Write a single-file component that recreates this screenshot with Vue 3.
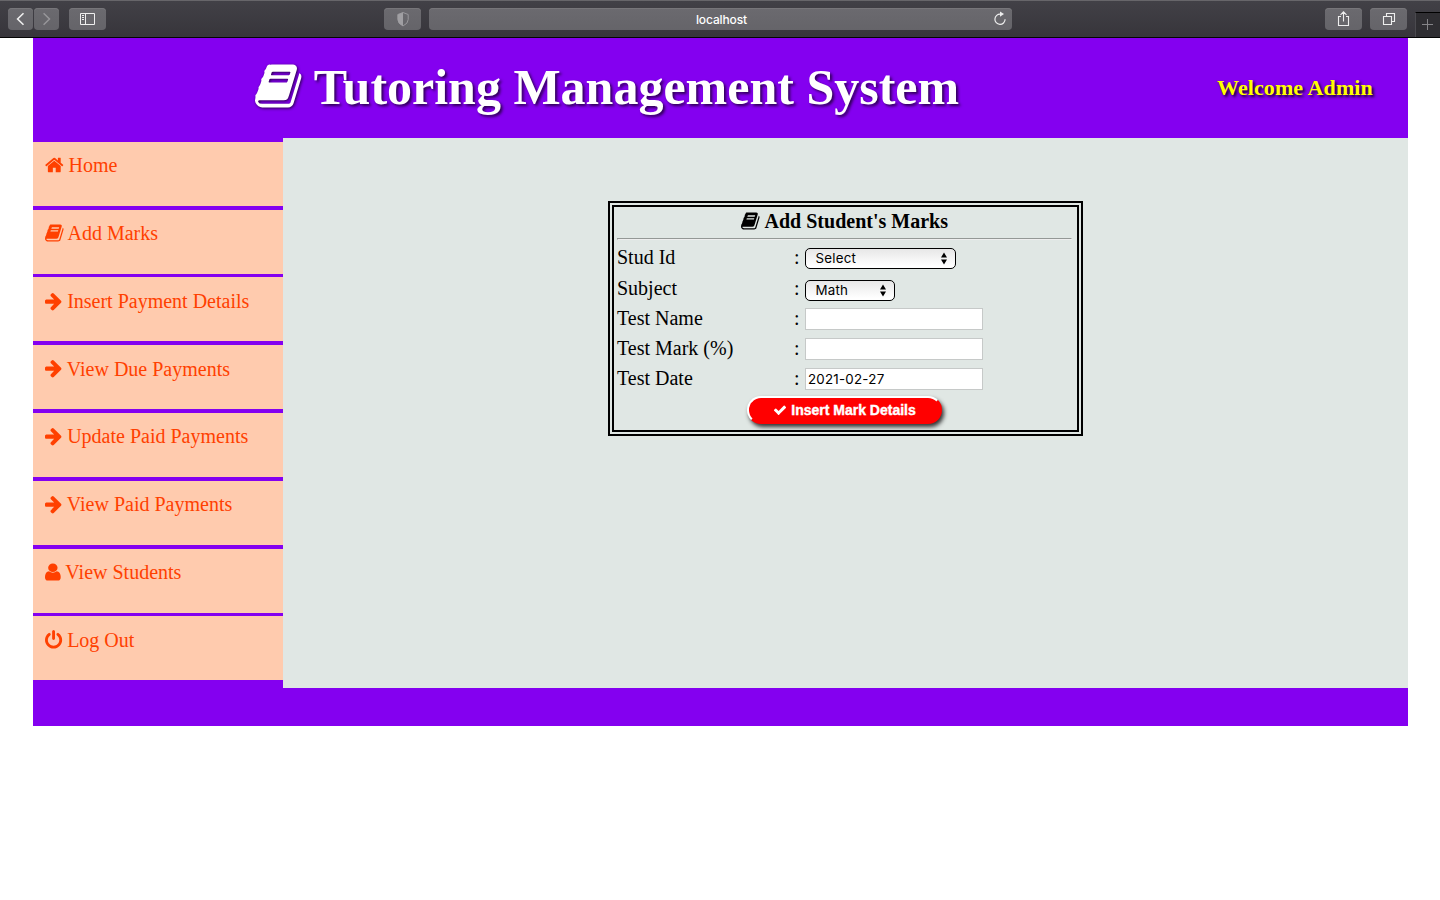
<script setup>
const icons = {
  home: { box: '64 0 1664 1792', w: 0.9286, d: 'M1472 992v480q0 26-19 45t-45 19h-384v-384h-256v384h-384q-26 0-45-19t-19-45v-480q0-1 .5-3t.5-3l575-474 575 474q1 2 1 6zm223-69l-62 74q-8 9-21 11h-3q-13 0-21-7l-692-577-692 577q-12 8-24 7-13-2-21-11l-62-74q-8-10-7-23.5t11-21.5l719-599q32-26 76-26t76 26l244 204v-195q0-14 9-23t23-9h192q14 0 23 9t9 23v408l219 182q10 8 11 21.5t-7 23.5z' },
  book: { box: '64 0 1664 1792', w: 0.9286, d: 'M1703 478q40 57 18 129l-275 906q-19 64-76.5 107.5t-122.5 43.5h-923q-77 0-148.5-53.5t-99.5-131.5q-24-67-2-127 0-4 3-27t4-37q1-8-3-21.5t-3-19.5q2-11 8-21t16.5-23.5 16.5-23.5q23-38 45-91.5t30-91.5q3-10 .5-30t-.5-28q3-11 17-28t17-23q21-36 42-92t25-90q1-9-2.5-32t.5-28q4-13 22-30.5t22-22.5q19-26 42.5-84.5t27.5-96.5q1-8-3-25.5t-2-26.5q2-8 9-18t18-23 17-21q8-12 16.5-30.5t15-35 16-36 19.5-32 26.5-23.5 36-11.5 47.5 5.5l-1 3q38-9 51-9h761q74 0 114 56t18 130l-274 906q-36 119-71.5 153.5t-128.5 34.5h-869q-27 0-38 15-11 16-1 43 24 70 144 70h923q29 0 56-15.5t35-41.5l300-987q7-22 5-57 38 15 59 43zm-1064 2q-4 13 2 22.5t20 9.5h608q13 0 25.5-9.5t16.5-22.5l21-64q4-13-2-22.5t-20-9.5h-608q-13 0-25.5 9.5t-16.5 22.5zm-83 256q-4 13 2 22.5t20 9.5h608q13 0 25.5-9.5t16.5-22.5l21-64q4-13-2-22.5t-20-9.5h-608q-13 0-25.5 9.5t-16.5 22.5z' },
  arrow: { box: '128 0 1536 1792', w: 0.8571, d: 'M1600 960q0 54-37 91l-651 651q-39 37-91 37-51 0-90-37l-75-75q-38-38-38-91t38-91l293-293h-704q-52 0-84.5-37.5t-32.5-90.5v-128q0-53 32.5-90.5t84.5-37.5h704l-293-294q-38-36-38-90t38-90l75-75q38-38 90-38 53 0 91 38l651 651q37 35 37 90z' },
  user: { box: '256 0 1280 1792', w: 0.7857, d: 'M1536 1399q0 109-62.5 187t-150.5 78h-854q-88 0-150.5-78t-62.5-187q0-85 8.5-160.5t31.5-152 58.5-131 94-89 134.5-34.5q131 128 313 128t313-128q76 0 134.5 34.5t94 89 58.5 131 31.5 152 8.5 160.5zm-256-887q0 159-112.5 271.5t-271.5 112.5-271.5-112.5-112.5-271.5 112.5-271.5 271.5-112.5 271.5 112.5 112.5 271.5z' },
  power: { box: '128 0 1536 1792', w: 0.8571, d: 'M1664 896q0 156-61 298t-164 245-245 164-298 61-298-61-245-164-164-245-61-298q0-182 80.5-343t226.5-270q43-32 95.5-25t83.5 50q32 42 24.5 94.5t-49.5 84.5q-98 74-151.5 181t-53.5 228q0 104 40.5 198.5t109.5 163.5 163.5 109.5 198.5 40.5 198.5-40.5 163.5-109.5 109.5-163.5 40.5-198.5q0-121-53.5-228t-151.5-181q-42-32-49.5-84.5t24.5-94.5q31-43 84-50t95 25q146 109 226.5 270t80.5 343zm-640-768v640q0 52-38 90t-90 38-90-38-38-90v-640q0-52 38-90t90-38 90 38 38 90z' }
}
const menu = [
  { icon: icons.home, text: 'Home' },
  { icon: icons.book, text: 'Add Marks' },
  { icon: icons.arrow, text: 'Insert Payment Details' },
  { icon: icons.arrow, text: 'View Due Payments' },
  { icon: icons.arrow, text: 'Update Paid Payments' },
  { icon: icons.arrow, text: 'View Paid Payments' },
  { icon: icons.user, text: 'View Students' },
  { icon: icons.power, text: 'Log Out' }
]
const rows = [
  { label: 'Stud Id', kind: 'select wide', value: 'Select' },
  { label: 'Subject', kind: 'select narrow', value: 'Math' },
  { label: 'Test Name', kind: 'input', value: '' },
  { label: 'Test Mark (%)', kind: 'input', value: '' },
  { label: 'Test Date', kind: 'input', value: '2021-02-27' }
]
</script>

<template>
  <div class="screen">
    <div class="chrome">
      <div class="btn nav back"><svg width="25" height="22" viewBox="0 0 25 22"><path d="M15.5 5.2L9.6 11l5.9 5.8" fill="none" stroke="#eee" stroke-width="1.6" /></svg></div>
      <div class="btn nav fwd"><svg width="25" height="22" viewBox="0 0 25 22"><path d="M9.6 5.2l5.9 5.8-5.9 5.8" fill="none" stroke="#97969a" stroke-width="1.5" /></svg></div>
      <div class="btn side"><svg width="37" height="22" viewBox="0 0 37 22"><path d="M11.5 5.5h14v11h-14zM16.5 5.5v11M13 7.5h2M13 9.5h2M13 11.5h2" fill="none" stroke="#eee" /></svg></div>
      <div class="btn shield"><svg width="37" height="22" viewBox="0 0 37 22"><path d="M19 4.5l5.2 2v5q0 4-5.2 6.5-5.2-2.5-5.2-6.5v-5z" fill="none" stroke="#98979b" /><path d="M19 4.5l-5.2 2v5q0 4 5.2 6.5z" fill="#a09fa3" /></svg></div>
      <div class="btn address">
        <span>localhost</span>
        <svg class="reload" width="16" height="16" viewBox="0 0 16 16"><path d="M8.5 3.2A5.1 5.1 0 1 0 13.1 8.3" fill="none" stroke="#eee" stroke-width="1.2" /><path d="M8 .5v5.3l4-2.8z" fill="#eee" /></svg>
      </div>
      <div class="btn share"><svg width="37" height="22" viewBox="0 0 37 22"><path d="M16 8.5h-2.500v9h10v-9H21M18.5 13.5V4M15.5 6.800l3-3 3 3" fill="none" stroke="#eee" stroke-width="1.1" /></svg></div>
      <div class="btn tabs"><svg width="37" height="22" viewBox="0 0 37 22"><path d="M13.5 8.5h8v8h-8zM16.5 8V5.5h8v8H22" fill="none" stroke="#eee" stroke-width="1.1" /></svg></div>
      <div class="newtab"><svg width="24" height="24" viewBox="0 0 24 24"><path d="M6 11.5h11M11.5 6v11" stroke="#858488" fill="none" /></svg></div>
    </div>

    <div class="site">
      <header>
        <h1><svg class="fa" :viewBox="icons.book.box"><path :d="icons.book.d" /></svg> Tutoring Management System</h1>
        <div class="welcome">Welcome Admin</div>
      </header>
      <div class="body">
        <nav>
          <a v-for="m in menu" :key="m.text"><svg class="fa" preserveAspectRatio="none" :viewBox="m.icon.box" :style="{ width: m.icon.w + 'em' }"><path :d="m.icon.d" /></svg> {{ m.text }}</a>
        </nav>
        <main>
          <form class="card">
            <h2><svg class="fa" :viewBox="icons.book.box"><path :d="icons.book.d" /></svg> Add Student's Marks</h2>
            <div class="rule"></div>
            <div v-for="r in rows" :key="r.label" class="row" :class="r.kind">
              <span class="label">{{ r.label }}</span>
              <span class="colon">:</span>
              <div class="field">
                <span>{{ r.value }}</span>
                <svg v-if="r.kind !== 'input'" width="8" height="13" viewBox="0 0 8 13"><path d="M1 5.5L4 .5l3 5zM1 7.5h6l-3 5z" /></svg>
              </div>
            </div>
            <div class="submit">
              <svg class="fa" viewBox="0 0 1792 1792"><path d="M1671 566q0 40-28 68l-724 724-136 136q-28 28-68 28t-68-28l-136-136-362-362q-28-28-28-68t28-68l136-136q28-28 68-28t68 28l294 295 656-657q28-28 68-28t68 28l136 136q28 28 28 68z" /></svg>
              <span>Insert Mark Details</span>
            </div>
          </form>
        </main>
      </div>
      <footer></footer>
    </div>
  </div>
</template>

<style>
body { margin: 0; background: #fff; }
</style>

<style scoped>
* { box-sizing: border-box; }
.screen { width: 1440px; height: 900px; overflow: hidden; background: #fff; font-family: "Liberation Serif", "Times New Roman", serif; }
.chrome { display: flex; height: 38px; padding: 8px 0 0 8px; background: linear-gradient(#424147, #37353b); border-bottom: 1px solid #050505; box-shadow: inset 0 1px #67666a; font-family: Inter, sans-serif; }
.btn { height: 22px; border-radius: 4px; background: linear-gradient(#6b6a6f, #656469); box-shadow: inset 0 1px #77767a; flex: none; }
.btn svg { display: block; }
.nav { width: 25px; }
.fwd { margin-left: 1px; }
.side { width: 37px; margin-left: 10px; }
.shield { width: 37px; margin-left: 278px; }
.address { width: 583px; margin-left: 8px; display: flex; position: relative; justify-content: center; align-items: center; color: #fff; font-size: 12px; line-height: 22px; font-weight: 500; letter-spacing: -.12px; }
.address span { padding: 2px 0 0 2px; }
.reload { position: absolute; right: 4px; top: 3px; }
.share { width: 37px; margin-left: 313px; }
.tabs { width: 37px; margin-left: 8px; }
.newtab { width: 25px; height: 25px; margin: 4px 0 0 8px; background: #2f2e32; border-top: 1px solid #000; border-left: 1px solid #4b4a4f; }
.fa { display: inline-block; height: 1em; width: .9286em; vertical-align: -.143em; fill: currentColor; overflow: visible; }

.site { width: 1375px; margin-left: 33px; background: #8400f0; }
header { height: 100px; display: flex; align-items: center; }
h1 { width: 1149px; margin: 0 0 2px; text-align: center; color: #fff; font-size: 50px; line-height: 58px; white-space: nowrap; text-shadow: 2px 2px 3px rgba(0, 0, 0, .65); }
h1 .fa { margin: 0 .6px 0 -.6px; filter: drop-shadow(1.5px 1.5px 1.5px rgba(0, 0, 0, .7)); }
.welcome { margin-left: 35px; color: #ff0; font-weight: bold; font-size: 22px; letter-spacing: .1px; white-space: nowrap; text-shadow: 2px 2px 3px rgba(0, 0, 0, .85); }
.body { display: flex; height: 550px; }
nav { width: 250px; padding-top: 3.8px; display: flex; flex-direction: column; gap: 3.8px; }
nav a { display: block; flex: none; height: 64px; padding: 12.35px 0 0 12px; background: #ffcbae; color: #ff4000; font-size: 20px; line-height: 23px; white-space: nowrap; }
main { flex: 1; background: #e0e7e4; }
footer { height: 38px; }

.card { width: 475px; height: 235px; margin: 63px 0 0 325px; border: 6px double #000; padding: 3px; font-size: 20px; line-height: 23px; color: #000; }
h2 { margin: 0; font-size: 20px; line-height: 23px; text-align: center; width: 455px; }
h2 .fa { margin-right: 1px; }
.rule { width: 455px; height: 2px; margin: 5px 0 4px; border: 1px solid; border-color: #949896 #eee #eee #949896; }
.row { height: 30px; display: flex; padding-top: 2px; }
.row.wide { height: 31px; }
.label { width: 177px; }
.colon { width: 11px; }
.field { width: 178px; height: 22px; margin-top: 1px; padding-left: 2px; border: 1px solid #c6c9c8; background: #fff; font: 13.33px/20px Inter, sans-serif; letter-spacing: .23px; }
.select .field { height: 21px; margin-top: 2px; padding: 0 7px 0 9.5px; display: flex; justify-content: space-between; align-items: center; border: 1px solid #000; border-radius: 5px; background: linear-gradient(#e7e7e7, #fff 90%); line-height: 19px; font-size: 13.33px; }
.select.wide .field { width: 151px; }
.select.narrow .field { width: 90px; margin-top: 3px; }
.submit { width: 195px; height: 28px; margin: 1px 0 0 130px; border: 2px solid; border-radius: 14px; border-color: #fff red red #fff; background: red; color: #fff; display: flex; justify-content: center; align-items: center; gap: 4px; font: bold 14px/16px "Liberation Sans", Arial, sans-serif; white-space: nowrap; box-shadow: 2px 3px 4px #333; -webkit-text-stroke: .4px #fff; }
.submit .fa { width: 1em; }
</style>
